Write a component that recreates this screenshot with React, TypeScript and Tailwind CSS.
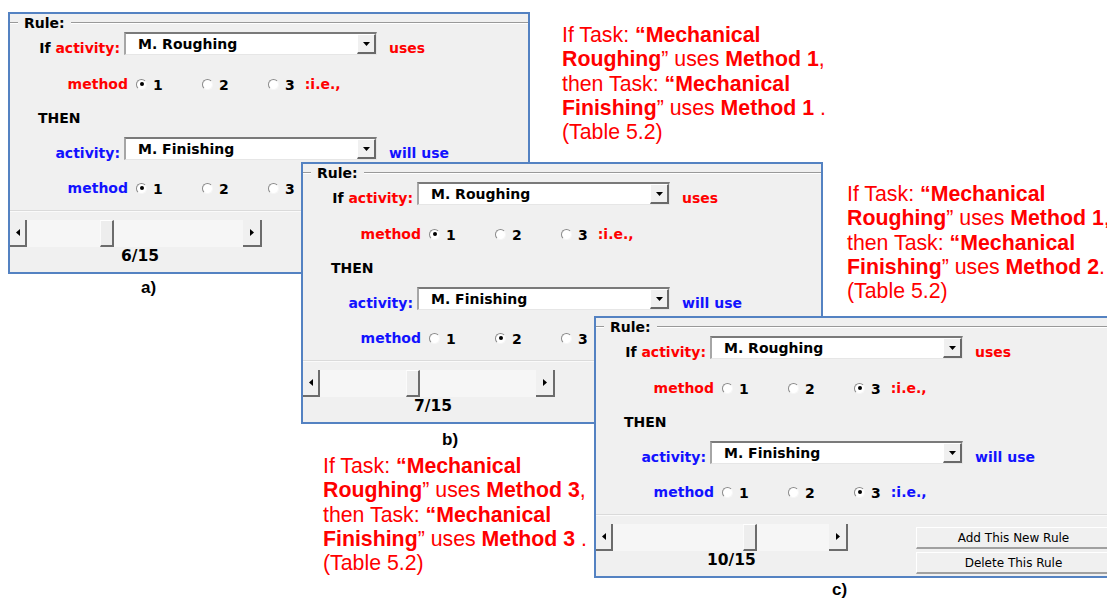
import React from "react";

type PanelData = {
  pos: string;
  m1: number;
  m2: number;
  thumb: string;
  count: string;
};

const panels: PanelData[] = [
  { pos: "left-[8px] top-[12px] z-10", m1: 1, m2: 1, thumb: "ml-[73px]", count: "6/15" },
  { pos: "left-[301px] top-[162px] z-20", m1: 1, m2: 2, thumb: "ml-[86px]", count: "7/15" },
  { pos: "left-[594px] top-[316px] z-30", m1: 3, m2: 3, thumb: "ml-[130px]", count: "10/15" },
];

function Radio({ on }: { on: boolean }) {
  return (
    <span className="flex h-[11px] w-[11px] items-center justify-center rounded-full border border-t-[#8a8a8a] border-l-[#8a8a8a] border-r-[#f6f6f6] border-b-[#f6f6f6] bg-white">
      {on && <span className="h-[4px] w-[4px] rounded-full bg-black" />}
    </span>
  );
}

function MethodRow({ color, value }: { color: string; value: number }) {
  return (
    <div className="flex h-[20px] items-center">
      <span className={`w-[118px] text-right ${color}`}>method</span>
      <div className="ml-[8px] flex items-center">
        {[1, 2, 3].map((n) => (
          <span key={n} className={`flex items-center gap-[6px] ${n < 3 ? "w-[66px]" : ""}`}>
            <Radio on={value === n} />
            <span className="mt-[2px]">{n}</span>
          </span>
        ))}
        <span className={`ml-[10px] ${color}`}>:i.e.,</span>
      </div>
    </div>
  );
}

function Dropdown({ value }: { value: string }) {
  return (
    <div className="flex h-[23px] w-[253px] border-t-2 border-l-2 border-b border-r border-t-[#7a7a7a] border-l-[#a6a6a6] border-b-[#e6e6e6] border-r-[#e6e6e6] bg-white">
      <span className="flex-1 pl-[12px] leading-[20px]">{value}</span>
      <span className="flex w-[19px] items-center justify-center border-t border-l border-r-2 border-b-2 border-t-white border-l-white border-r-[#696969] border-b-[#696969] bg-[#f0f0f0]">
        <svg width="7" height="4" viewBox="0 0 7 4">
          <path d="M0 0h7L3.5 4z" fill="#000" />
        </svg>
      </span>
    </div>
  );
}

function ArrowBtn({ dir, w }: { dir: "l" | "r"; w: string }) {
  return (
    <span className={`flex h-full ${w} items-center justify-center border-r-2 border-b-2 border-r-[#6c6c6c] border-b-[#6c6c6c] bg-[#f0f0f0]`}>
      <svg width="4" height="7" viewBox="0 0 4 7">
        <path d={dir === "l" ? "M4 0v7L0 3.5z" : "M0 0v7l4-3.5z"} fill="#000" />
      </svg>
    </span>
  );
}

function Panel({ p }: { p: PanelData }) {
  const red = "text-[#ff0000]";
  const blue = "text-[#1212ff]";
  return (
    <div
      className={`absolute ${p.pos} flex h-[262px] w-[522px] flex-col border-2 border-[#5482c2] bg-[#f0f0f0] font-['DejaVu_Sans',sans-serif] text-[14px] font-bold text-black`}
    >
      {/* group header */}
      <div className="flex h-[18px] items-center">
        <span className="h-[2px] w-[8px] border-t border-b border-t-[#999999] border-b-white" />
        <span className="px-[6px] leading-[18px]">Rule:</span>
        <span className="h-[2px] flex-1 border-t border-b border-t-[#999999] border-b-white" />
      </div>

      <div className="flex h-[23px] items-center">
        <span className="w-[110px] translate-y-[5px] text-right">
          If <span className={red}>activity:</span>
        </span>
        <span className="ml-[4px]">
          <Dropdown value="M. Roughing" />
        </span>
        <span className={`ml-[12px] translate-y-[5px] ${red}`}>uses</span>
      </div>

      <div className="mt-[19px]">
        <MethodRow color={red} value={p.m1} />
      </div>

      <div className="mt-[14px] flex h-[20px] items-center pl-[28px]">THEN</div>

      <div className="mt-[9px] flex h-[23px] items-center">
        <span className={`w-[110px] translate-y-[5px] text-right ${blue}`}>activity:</span>
        <span className="ml-[4px]">
          <Dropdown value="M. Finishing" />
        </span>
        <span className={`ml-[12px] translate-y-[5px] ${blue}`}>will use</span>
      </div>

      <div className="mt-[18px]">
        <MethodRow color={blue} value={p.m2} />
      </div>

      <div className="mt-[12px] h-[2px] border-t border-b border-t-[#dadada] border-b-[#fafafa]" />

      <div className="mt-[8px] flex">
        <div className="flex flex-col">
          <div className="flex h-[27px] w-[252px] bg-[#f6f6f6]">
            <ArrowBtn dir="l" w="w-[17px]" />
            <div className="flex flex-1">
              <span className={`h-full w-[14px] border-t border-l border-r-2 border-b-2 border-t-white border-l-[#fbfbfb] border-r-[#6c6c6c] border-b-[#6c6c6c] bg-[#ededed] ${p.thumb}`} />
            </div>
            <ArrowBtn dir="r" w="w-[19px]" />
          </div>
          <div className="h-[16px] pl-[111px] text-[15.5px] leading-[18px]">{p.count}</div>
        </div>
        <div className="ml-[68px] mt-[3px] flex flex-col gap-[3px] text-[12px] font-normal">
          <span className="flex h-[22px] w-[196px] items-center justify-center border-t border-l border-b-2 border-r-2 border-t-white border-l-white border-b-[#a0a0a0] border-r-[#a0a0a0] bg-[#f0f0f0]">
            Add This New Rule
          </span>
          <span className="flex h-[22px] w-[196px] items-center justify-center border-t border-l border-b-2 border-r-2 border-t-white border-l-white border-b-[#a0a0a0] border-r-[#a0a0a0] bg-[#f0f0f0]">
            Delete This Rule
          </span>
        </div>
      </div>
    </div>
  );
}

function Note({ pos, first, second, third }: { pos: string; first: string; second: string; third: string }) {
  return (
    <div
      className={`absolute ${pos} whitespace-nowrap font-['Liberation_Sans',Arial,sans-serif] text-[21.3px] leading-[24.3px] text-[#ff0000]`}
    >
      <div>
        If Task: <b>“Mechanical</b>
      </div>
      <div>
        <b>Roughing</b>” uses <b>Method {first}</b>,
      </div>
      <div>
        then Task: <b>“Mechanical</b>
      </div>
      <div>
        <b>Finishing</b>” uses <b>Method {second}</b>
        {third}
      </div>
      <div>(Table 5.2)</div>
    </div>
  );
}

export default function App() {
  return (
    <div className="relative h-[599px] w-[1107px] overflow-hidden bg-white">
      {panels.map((p) => (
        <Panel key={p.count} p={p} />
      ))}

      <Note pos="left-[562px] top-[23px]" first="1" second="1" third=" ." />
      <Note pos="left-[847px] top-[182px]" first="1" second="2" third="." />
      <Note pos="left-[323px] top-[454px] z-10" first="3" second="3" third=" ." />

      <span className="absolute left-[141px] top-[279px] font-['Liberation_Sans',Arial,sans-serif] text-[17px] font-bold leading-[17px]">a)</span>
      <span className="absolute left-[442px] top-[431px] font-['Liberation_Sans',Arial,sans-serif] text-[17px] font-bold leading-[17px]">b)</span>
      <span className="absolute left-[832px] top-[581px] font-['Liberation_Sans',Arial,sans-serif] text-[17px] font-bold leading-[17px]">c)</span>
    </div>
  );
}
